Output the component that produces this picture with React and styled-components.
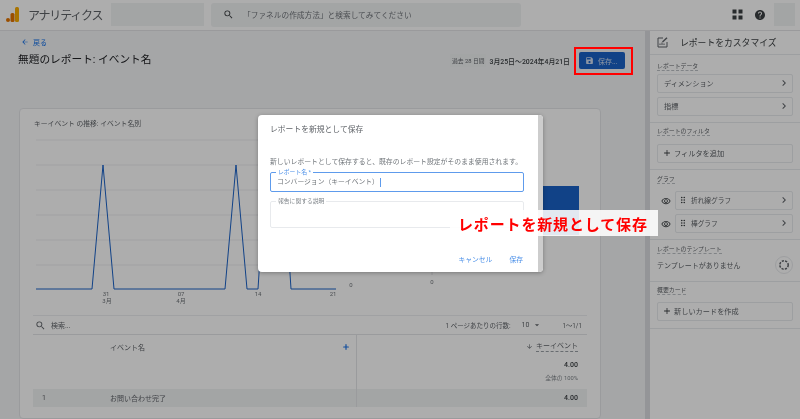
import React from 'react';
import styled, { createGlobalStyle } from 'styled-components';
import { Plus } from 'lucide-react';
import {
  MdAdd,
  MdArrowBack,
  MdArrowDownward,
  MdArrowDropDown,
  MdChevronRight,
  MdDragIndicator,
  MdHelp,
  MdOutlineRemoveRedEye,
  MdSave,
  MdSearch,
} from 'react-icons/md';

const GlobalStyle = createGlobalStyle`
  html, body { margin: 0; padding: 0; background: #a5a7a8; }
  body { font-family: Roboto, "Noto Sans CJK JP", "Noto Sans", sans-serif; color: #3c4043; }
  * { box-sizing: border-box; }
`;

const Page = styled.div`
  position: relative;
  width: 800px;
  height: 419px;
  overflow: hidden;
  display: flex;
  flex-direction: column;
  background: #f3f5f7;
  filter: blur(0.35px);
`;

/* header */
const Header = styled.header`
  height: 31px;
  flex: none;
  display: flex;
  align-items: center;
  background: #fff;
  border-bottom: 1px solid #e3e4e6;
  padding: 0 5px 1px 6px;
`;

const Brand = styled.div`
  width: 105px;
  flex: none;
  display: flex;
  align-items: center;
  gap: 9px;
  font-size: 12px;
  letter-spacing: -1.2px;
  color: #5f6368;
`;

const BlankBox = styled.div`
  flex: none;
  width: ${p => p.$w}px;
  height: 23px;
  background: #f1f3f4;
`;

const SearchBar = styled.div`
  width: 310px;
  height: 24px;
  margin-left: 7px;
  flex: none;
  display: flex;
  align-items: center;
  gap: 9px;
  padding-left: 12px;
  background: #f1f3f4;
  border-radius: 3px;
  font-size: 7.7px;
  color: #70757a;
  svg { color: #3c4043; font-size: 11px; }
`;

const HeaderIcons = styled.div`
  margin-left: auto;
  display: flex;
  align-items: center;
  gap: 8px;
  color: #3c4043;
`;

const GridSvg = styled.svg`
  margin-right: 3px;
`;

/* body */
const Body = styled.div`
  flex: 1;
  display: flex;
  min-height: 0;
`;

const Main = styled.main`
  width: 645px;
  flex: none;
  padding-top: 6px;
`;

const Scrollbar = styled.div`
  width: 5px;
  flex: none;
  background: #dadce0;
`;

const BackLink = styled.div`
  height: 10px;
  padding-left: 21px;
  display: flex;
  align-items: center;
  gap: 4px;
  font-size: 7px;
  color: #1a73e8;
`;

const TitleRow = styled.div`
  margin-top: 5px;
  height: 17px;
  padding: 0 20px 0 18px;
  display: flex;
  align-items: center;
`;

const PageTitle = styled.h1`
  margin: -4px 0 0;
  font-size: 10.7px;
  font-weight: 400;
  color: #202124;
`;

const DateChip = styled.span`
  margin-left: auto;
  padding: 2px 2px;
  background: #f1f3f4;
  font-size: 5.8px;
  color: #5f6368;
`;

const DateText = styled.span`
  margin-left: 3px;
  font-size: 6.9px;
  font-weight: 500;
  color: #3c4043;
`;

const SaveButton = styled.button`
  margin-left: 9px;
  width: 46px;
  height: 17px;
  display: flex;
  align-items: center;
  gap: 4px;
  padding: 0 0 0 6px;
  border: 0;
  border-radius: 2px;
  background: #1a62c8;
  color: #cfdcf0;
  font: inherit;
  font-size: 7px;
`;

const Card = styled.section`
  margin: 39px 0 0 19px;
  width: 582px;
  height: 311px;
  border: 1px solid #e3e5e8;
  border-radius: 4px;
  background: #fff;
  display: flex;
  flex-direction: column;
`;

const CardTitle = styled.div`
  margin: 9px 0 5px 14px;
  height: 12px;
  line-height: 12px;
  font-size: 6.8px;
  color: #5f6368;
`;

const ChartSvg = styled.svg`
  display: block;
  flex: none;
  margin-left: -1px;
  text { font-size: 6px; fill: #70757a; text-anchor: middle; }
`;

const TableWrap = styled.div`
  margin: 5px 13px 0;
  font-size: 7px;
  color: #5f6368;
`;

const TableBar = styled.div`
  height: 20px;
  display: flex;
  align-items: center;
  padding: 0 5px 0 2px;
  border-top: 1px solid #eceef0;
  border-bottom: 1px solid #e3e5e8;
  svg { flex: none; }
`;

const BarText = styled.span`
  margin-left: ${p => p.$left || 0}px;
  ${p => p.$auto && 'margin-left: auto;'}
  font-size: ${p => p.$size || 7}px;
`;

const PageSizeCaret = styled(MdArrowDropDown)`
  margin-left: 3px;
`;

const Row = styled.div`
  display: grid;
  grid-template-columns: 324px 230px;
  height: ${p => p.$h}px;
  background: ${p => p.$bg || 'transparent'};
`;

const NameCell = styled.div`
  position: relative;
  display: flex;
  align-items: ${p => (p.$top ? 'flex-start' : 'center')};
  padding: ${p => (p.$top ? '7px' : '0')} 0 0 77px;
  border-right: 1px solid #e3e5e8;
  color: #5f6368;
  svg { margin: 1px 0 0 197px; color: #1a73e8; flex: none; }
`;

const RowNumber = styled.span`
  position: absolute;
  left: 9px;
`;

const ValueCell = styled.div`
  display: flex;
  flex-direction: column;
  align-items: flex-end;
  justify-content: ${p => (p.$top ? 'flex-start' : 'center')};
  padding: ${p => (p.$top ? '6px' : '0')} 9px 0 0;
  font-size: 7px;
  font-weight: 500;
  color: #3c4043;
`;

const SortLabel = styled.div`
  display: flex;
  align-items: center;
  gap: 3px;
  font-weight: 400;
  color: #5f6368;
  span { border-bottom: 1px dashed #9aa0a6; line-height: 10px; }
`;

const Total = styled.div`
  margin-top: 9px;
  font-weight: 500;
`;

const TotalShare = styled.div`
  margin-top: 4px;
  font-size: 5.8px;
  font-weight: 400;
  color: #80868b;
`;

/* right panel */
const Side = styled.aside`
  flex: 1;
  background: #fff;
`;

const SideHeader = styled.div`
  height: 24px;
  padding-left: 7px;
  display: flex;
  align-items: center;
  gap: 12px;
  border-bottom: 1px solid #e8eaed;
  font-size: 8.8px;
  color: #3c4043;
`;

const Section = styled.div`
  padding: ${p => p.$top}px 7px ${p => p.$bottom}px;
  border-bottom: 1px solid #e8eaed;
`;

const SectionLabel = styled.div`
  height: 9px;
  line-height: 8px;
  margin-bottom: ${p => p.$gap}px;
  width: max-content;
  font-size: 5.9px;
  color: #5f6368;
  border-bottom: 1px dashed #bdc1c6;
`;

const OptionBox = styled.div`
  height: 19px;
  flex: 1;
  display: flex;
  align-items: center;
  padding: 0 2px 2px 6px;
  border: 1px solid #e8eaed;
  border-radius: 2px;
  font-size: 7.2px;
  color: #5f6368;
  & + & { margin-top: 4px; }
  > svg:last-child { margin-left: auto; color: #5f6368; }
`;

const AddBox = styled(OptionBox)`
  gap: 2px;
  padding-left: 4px;
  > svg:last-child { margin-left: 0; color: #3c4043; }
`;

const GraphRow = styled.div`
  display: flex;
  align-items: center;
  gap: 4px;
  padding-left: 4px;
  & + & { margin-top: 4px; }
  > svg { color: #3c4043; flex: none; }
  ${OptionBox} { padding-left: 2px; font-size: 6.7px; }
  ${OptionBox} > svg:first-child { margin-right: 3px; color: #3c4043; }
`;

const TemplateRow = styled.div`
  height: 18px;
  display: flex;
  align-items: center;
  justify-content: space-between;
  font-size: 7px;
  color: #5f6368;
`;

const RoundButton = styled.div`
  width: 18px;
  height: 18px;
  border-radius: 50%;
  border: 1px solid #e8eaed;
  display: flex;
  align-items: center;
  justify-content: center;
`;

/* modal layer */
const Scrim = styled.div`
  position: absolute;
  inset: 0;
  background: rgba(0, 0, 0, 0.32);
`;

const Highlight = styled.div`
  position: absolute;
  left: 574px;
  top: 47px;
  width: 59px;
  height: 28px;
  border: 2px solid #f00;
`;

const Dialog = styled.div`
  position: absolute;
  left: 258px;
  top: 115px;
  width: 285px;
  height: 157px;
  padding: 9px 19px 0 12px;
  background: #fff;
  border-radius: 4px;
  overflow: hidden;
  box-shadow: 0 1px 4px rgba(0, 0, 0, 0.3);
  color: #5f6368;
`;

const DialogScroll = styled.div`
  position: absolute;
  top: 0;
  right: 0;
  bottom: 0;
  width: 5px;
  background: #cdcdcd;
`;

const DialogTitle = styled.div`
  height: 11px;
  line-height: 11px;
  font-size: 7.8px;
  color: #5f6368;
`;

const DialogText = styled.p`
  margin: 22px 0 0;
  height: 10px;
  line-height: 10px;
  width: 260px;
  white-space: nowrap;
  font-size: 6.85px;
  color: #70757a;
`;

const Field = styled.div`
  position: relative;
  width: 254px;
  height: ${p => p.$h}px;
  margin-top: ${p => p.$top}px;
  padding: 5px 6px 0;
  border: 1px solid ${p => (p.$active ? '#5e9bec' : '#e8eaed')};
  border-radius: 2px;
  font-size: 6.8px;
  line-height: 9px;
  color: #70757a;
`;

const FieldLabel = styled.span`
  position: absolute;
  left: 5px;
  top: -4px;
  padding: 0 2px;
  background: #fff;
  font-size: 5.8px;
  line-height: 7px;
  color: ${p => (p.$active ? '#4a8fe8' : '#80868b')};
`;

const Caret = styled.span`
  display: inline-block;
  width: 1px;
  height: 9px;
  margin-left: 1px;
  vertical-align: middle;
  background: #5e9bec;
`;

const DialogActions = styled.div`
  position: absolute;
  right: 20px;
  top: 140px;
  display: flex;
  gap: 17px;
  font-size: 6.8px;
  line-height: 10px;
  color: #4a8fe8;
`;

const Callout = styled.div`
  position: absolute;
  left: 450px;
  top: 210px;
  width: 208px;
  height: 26px;
  display: flex;
  align-items: center;
  padding-left: 8px;
  background: rgba(255, 255, 255, 0.88);
  font-size: 15px;
  font-weight: 700;
  letter-spacing: 0.85px;
  color: #f00;
  white-space: nowrap;
`;

const GridIcon = () => (
  <GridSvg width="11" height="11" viewBox="0 0 11 11" fill="#3c4043">
    <rect x="0.5" y="0.5" width="4" height="4" />
    <rect x="6.5" y="0.5" width="4" height="4" />
    <rect x="0.5" y="6.5" width="4" height="4" />
    <rect x="6.5" y="6.5" width="4" height="4" />
  </GridSvg>
);

const Logo = () => (
  <svg width="13" height="15" viewBox="0 0 13 15">
    <rect x="9" y="0" width="4" height="15" rx="1.5" fill="#f9ab00" />
    <rect x="4.5" y="6" width="4" height="9" rx="1.5" fill="#e37400" />
    <circle cx="2" cy="13" r="2" fill="#e37400" />
  </svg>
);

const CustomizeIcon = () => (
  <svg width="11" height="11" viewBox="0 0 11 11" fill="none" stroke="#5f6368" strokeWidth="1">
    <path d="M6 1H1v9h9V5" />
    <path d="M3 8V6.5M5 8V5.5M7 8V6.5" />
    <path d="M5.5 5L10 0.7" strokeWidth="1.4" />
  </svg>
);

const TemplateIcon = () => (
  <svg width="12" height="12" viewBox="0 0 12 12" fill="none" stroke="#5f6368" strokeWidth="1.5">
    <circle cx="6" cy="6" r="4.2" strokeDasharray="2.2 1.2" />
  </svg>
);

const gridLines = [140, 165, 190, 215, 240, 265];
const linePoints =
  '36,289 92,289 103,165 114,289 225,289 236,165 247,289 258,289 266,165 283,165 291,289 336,289';

const EventChart = () => (
  <ChartSvg width="582" height="175" viewBox="19 135 582 175">
    {gridLines.map(y => (
      <line key={y} x1="36" x2="345" y1={y} y2={y} stroke="#e8eaed" strokeWidth="0.8" />
    ))}
    <line x1="432" x2="432" y1="140" y2="275" stroke="#dadce0" strokeWidth="0.8" />
    <polyline points={linePoints} fill="none" stroke="#1a62c8" strokeWidth="1" />
    <rect x="543" y="186" width="36" height="49" fill="#1a62c8" />
    <text x="106" y="296">31</text>
    <text x="107" y="303">3月</text>
    <text x="181" y="296">07</text>
    <text x="181" y="303">4月</text>
    <text x="258" y="296">14</text>
    <text x="333" y="296">21</text>
    <text x="351" y="287">0</text>
    <text x="432" y="284">0</text>
  </ChartSvg>
);

export default function App() {
  return (
    <>
      <GlobalStyle />
      <Page>
        <Header>
          <Brand>
            <Logo />
            アナリティクス
          </Brand>
          <BlankBox $w={93} />
          <SearchBar>
            <MdSearch />
            「ファネルの作成方法」と検索してみてください
          </SearchBar>
          <HeaderIcons>
            <GridIcon />
            <MdHelp size={12} />
            <BlankBox $w={21} />
          </HeaderIcons>
        </Header>
        <Body>
          <Main>
            <BackLink>
              <MdArrowBack size={8} />
              戻る
            </BackLink>
            <TitleRow>
              <PageTitle>無題のレポート: イベント名</PageTitle>
              <DateChip>過去 28 日間</DateChip>
              <DateText>3月25日～2024年4月21日</DateText>
              <SaveButton>
                <MdSave size={9} />
                保存...
              </SaveButton>
            </TitleRow>
            <Card>
              <CardTitle>キーイベント の推移: イベント名別</CardTitle>
              <EventChart />
              <TableWrap>
                <TableBar>
                  <MdSearch size={11} />
                  <BarText $left={5}>検索...</BarText>
                  <BarText $auto $size={6.5}>1 ページあたりの行数:</BarText>
                  <BarText $left={11}>10</BarText>
                  <PageSizeCaret size={10} />
                  <BarText $left={20} $size={6.3}>1～1/1</BarText>
                </TableBar>
                <Row $h={54}>
                  <NameCell $top>
                    イベント名
                    <Plus size={8} strokeWidth={3.5} />
                  </NameCell>
                  <ValueCell $top>
                    <SortLabel>
                      <MdArrowDownward size={7} />
                      <span>キーイベント</span>
                    </SortLabel>
                    <Total>4.00</Total>
                    <TotalShare>全体の 100%</TotalShare>
                  </ValueCell>
                </Row>
                <Row $h={18} $bg="#f1f3f4">
                  <NameCell>
                    <RowNumber>1</RowNumber>
                    お問い合わせ完了
                  </NameCell>
                  <ValueCell>4.00</ValueCell>
                </Row>
              </TableWrap>
            </Card>
          </Main>
          <Scrollbar />
          <Side>
            <SideHeader>
              <CustomizeIcon />
              レポートをカスタマイズ
            </SideHeader>
            <Section $top={7} $bottom={6}>
              <SectionLabel $gap={3}>レポートデータ</SectionLabel>
              <OptionBox>
                ディメンション
                <MdChevronRight size={12} />
              </OptionBox>
              <OptionBox>
                指標
                <MdChevronRight size={12} />
              </OptionBox>
            </Section>
            <Section $top={4} $bottom={6}>
              <SectionLabel $gap={8}>レポートのフィルタ</SectionLabel>
              <AddBox>
                <MdAdd size={10} />
                フィルタを追加
              </AddBox>
            </Section>
            <Section $top={5} $bottom={6}>
              <SectionLabel $gap={7}>グラフ</SectionLabel>
              <GraphRow>
                <MdOutlineRemoveRedEye size={10} />
                <OptionBox>
                  <MdDragIndicator size={10} />
                  折れ線グラフ
                  <MdChevronRight size={12} />
                </OptionBox>
              </GraphRow>
              <GraphRow>
                <MdOutlineRemoveRedEye size={10} />
                <OptionBox>
                  <MdDragIndicator size={10} />
                  棒グラフ
                  <MdChevronRight size={12} />
                </OptionBox>
              </GraphRow>
            </Section>
            <Section $top={5} $bottom={7}>
              <SectionLabel $gap={2}>レポートのテンプレート</SectionLabel>
              <TemplateRow>
                テンプレートがありません
                <RoundButton>
                  <TemplateIcon />
                </RoundButton>
              </TemplateRow>
            </Section>
            <Section $top={4} $bottom={7}>
              <SectionLabel $gap={7}>概要カード</SectionLabel>
              <AddBox>
                <MdAdd size={10} />
                新しいカードを作成
              </AddBox>
            </Section>
          </Side>
        </Body>
        <Scrim />
        <Highlight />
        <Dialog>
          <DialogScroll />
          <DialogTitle>レポートを新規として保存</DialogTitle>
          <DialogText>新しいレポートとして保存すると、既存のレポート設定がそのまま使用されます。</DialogText>
          <Field $active $h={20} $top={5}>
            <FieldLabel $active>レポート名 *</FieldLabel>
            コンバージョン（キーイベント）
            <Caret />
          </Field>
          <Field $h={27} $top={9}>
            <FieldLabel>報告に関する説明</FieldLabel>
          </Field>
          <DialogActions>
            <span>キャンセル</span>
            <span>保存</span>
          </DialogActions>
        </Dialog>
        <Callout>レポートを新規として保存</Callout>
      </Page>
    </>
  );
}
